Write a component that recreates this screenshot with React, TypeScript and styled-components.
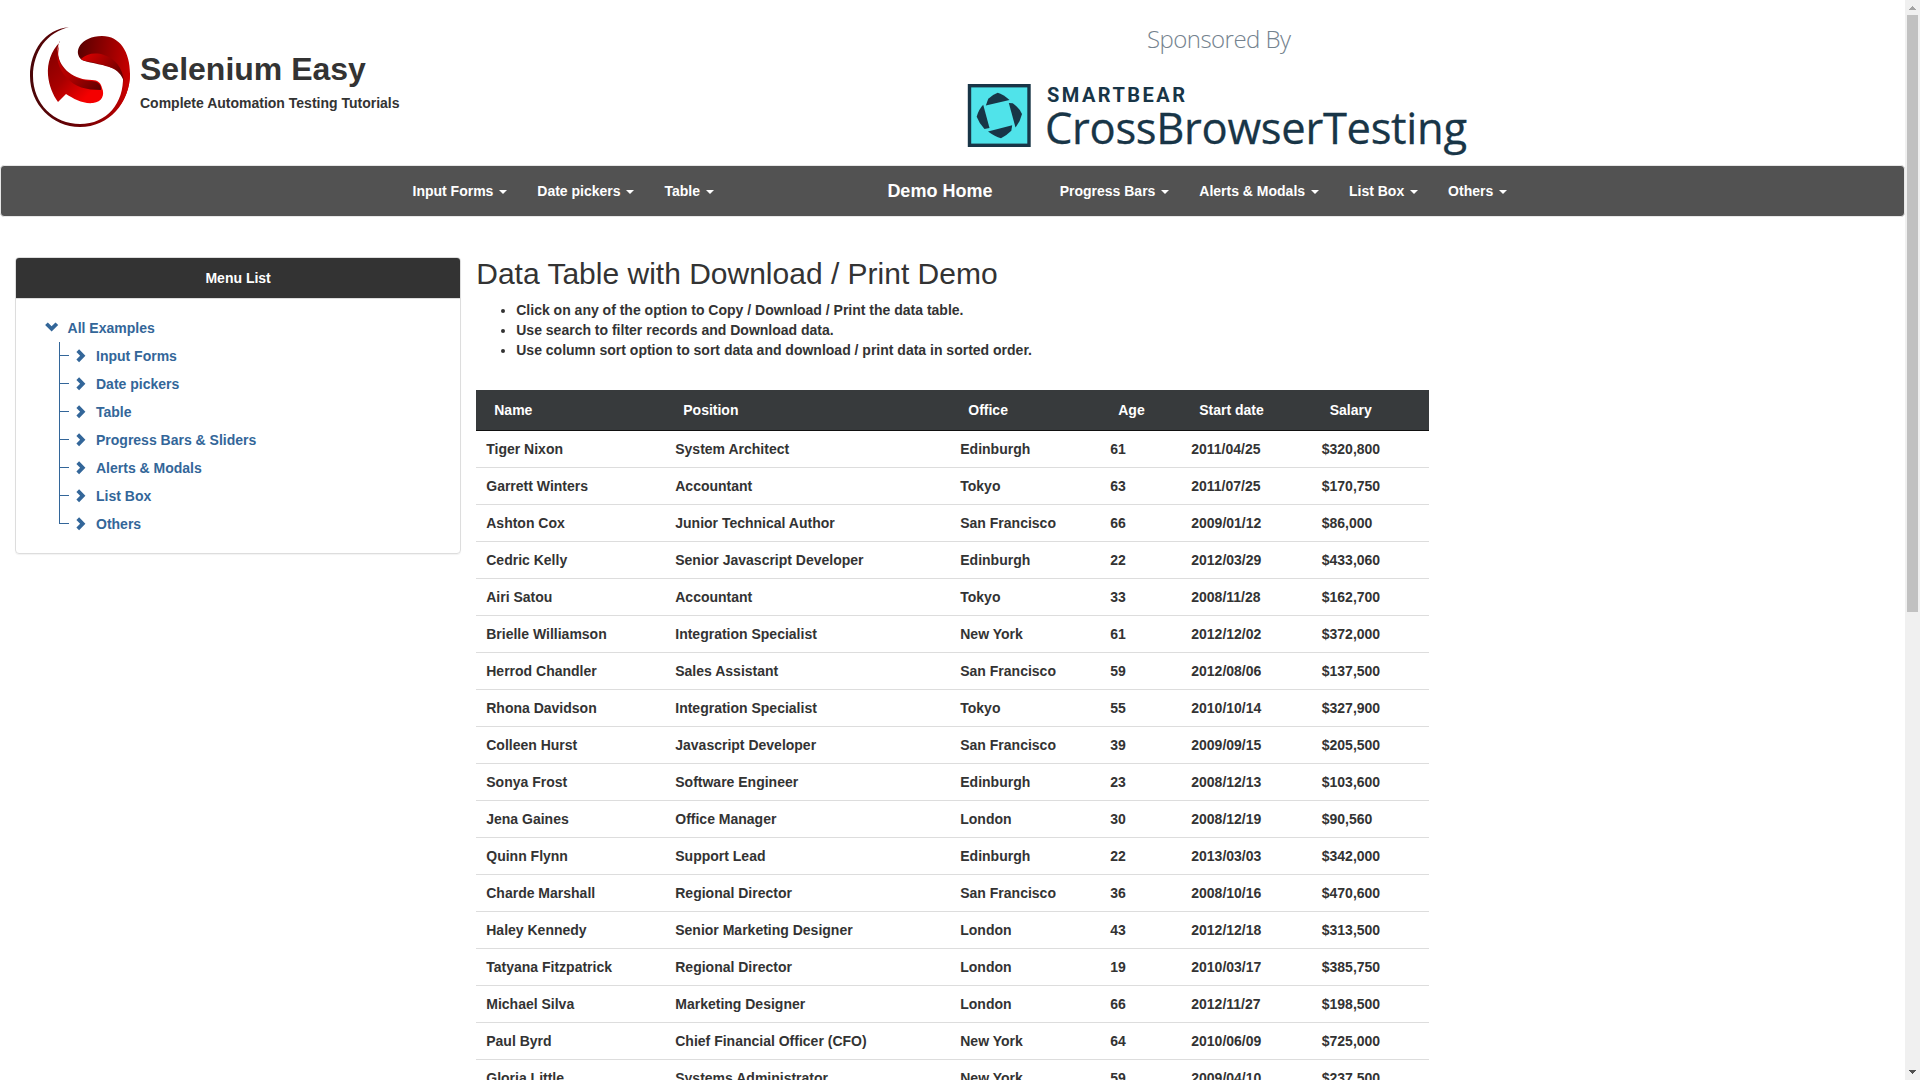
import React from "react";
import styled, { createGlobalStyle } from "styled-components";

const Global = createGlobalStyle`
  *, *::before, *::after { box-sizing: border-box; }
  html, body { margin: 0; height: 100%; overflow: hidden; }
  body {
    font: bold 14px/20px "Liberation Sans", Arial, sans-serif;
    color: #333;
    background: #fff;
  }
`;

const Window = styled.div`
  display: flex;
  width: 1920px;
  height: 1080px;
  overflow: hidden;
`;
const Page = styled.div`
  width: 1905px;
  height: 1080px;
  overflow: hidden;
`;

/* Header */
const Header = styled.header`
  display: flex;
  height: 165px;
`;
const Brand = styled.div`
  display: flex;
  align-items: flex-start;
  gap: 10px;
  width: 967px;
  padding: 27px 0 0 30px;
`;
const BrandText = styled.div`
  padding-top: 25px;
`;
const BrandTitle = styled.h1`
  margin: 0;
  font-size: 32px;
  line-height: 35px;
`;
const BrandSub = styled.div`
  margin-top: 6px;
`;
const Sponsor = styled.svg`
  display: block;
  width: 510px;
  height: 165px;
`;

/* Navigation bar */
const Nav = styled.nav`
  display: flex;
  height: 52px;
  border: 1px solid #e7e7e7;
  border-radius: 4px;
  background: #525252;
  color: #fff;
  white-space: nowrap;
`;
const NavGroup = styled.div<{ $left: number }>`
  display: flex;
  margin-left: ${(p) => p.$left}px;
`;
const NavItem = styled.a`
  padding: 15px;
`;
const NavHome = styled.a`
  width: 172.3px;
  margin-left: 143.5px;
  padding: 15px;
  font-size: 18px;
`;
const Caret = styled.b`
  display: inline-block;
  margin-left: 2px;
  vertical-align: middle;
  border-top: 4px solid;
  border-left: 4px solid transparent;
  border-right: 4px solid transparent;
`;

/* Columns */
const Columns = styled.div`
  display: flex;
  align-items: flex-start;
  gap: 15px;
  padding: 40px 15px 0;
`;
const Panel = styled.aside`
  width: 446.25px;
  height: 297px;
  border: 1px solid #ddd;
  border-radius: 4px;
  box-shadow: 0 1px 1px rgba(0, 0, 0, 0.05);
`;
const PanelHeading = styled.div`
  padding: 10px 15px;
  height: 41px;
  border-bottom: 1px solid #ddd;
  border-radius: 3px 3px 0 0;
  background: #333;
  color: #fff;
  text-align: center;
`;
const Tree = styled.div`
  padding: 19px 29px;
  color: #369;
`;
const TreeRoot = styled.div`
  display: flex;
  height: 24px;
`;
const Branches = styled.ul`
  list-style: none;
  margin: 0 0 0 14px;
  padding: 0;
`;
const Branch = styled.li`
  display: flex;
  height: 28px;
  line-height: 28px;
`;
const Elbow = styled.span<{ $last?: boolean }>`
  width: 10px;
  height: ${(p) => (p.$last ? 14 : 28)}px;
  margin-right: 7px;
  border-left: 1px solid #369;
  background: linear-gradient(#369, #369) 0 13px / 100% 1px no-repeat;
`;
const TreeIcon = styled.svg<{ $gap: number; $top: number }>`
  flex: none;
  width: 14px;
  height: 14px;
  margin: ${(p) => p.$top}px ${(p) => p.$gap}px 0 0;
  fill: #369;
`;

const Main = styled.main`
  width: 952.5px;
`;
const Title = styled.h2`
  margin: 0 0 10px;
  font-size: 30px;
  font-weight: 400;
  line-height: 33px;
`;
const Notes = styled.ul`
  margin: 0 0 30px;
  padding-left: 40px;
`;
const Table = styled.table`
  width: 952.5px;
  table-layout: fixed;
  border-collapse: separate;
  border-spacing: 0;
  white-space: nowrap;
`;
const Th = styled.th<{ $w: number }>`
  width: ${(p) => p.$w}px;
  padding: 10px 18px;
  border-bottom: 1px solid #111;
  background: #373a3c;
  color: #fff;
  text-align: left;
`;
const Td = styled.td`
  padding: 8px 10px;
  border-top: 1px solid #ddd;
  tr:first-child > & { border-top: 0; }
`;

/* Scrollbar */
const Scrollbar = styled.div`
  display: flex;
  flex-direction: column;
  width: 15px;
  height: 1080px;
  background: #f0f0f0;
`;
const Arrow = styled.svg`
  display: block;
  width: 15px;
  height: 15px;
`;
const Track = styled.div`
  flex: 1;
  padding: 0 2px;
`;
const Thumb = styled.div`
  height: 597px;
  background: #c1c1c1;
`;

const leftNav = ["Input Forms", "Date pickers", "Table"];
const rightNav = ["Progress Bars", "Alerts & Modals", "List Box", "Others"];
const tree = ["Input Forms", "Date pickers", "Table", "Progress Bars & Sliders", "Alerts & Modals", "List Box", "Others"];
const columns: [string, number][] = [
  ["Name", 189], ["Position", 285], ["Office", 150], ["Age", 81], ["Start date", 130.5], ["Salary", 117],
];
const rows = [
  ["Tiger Nixon", "System Architect", "Edinburgh", "61", "2011/04/25", "$320,800"],
  ["Garrett Winters", "Accountant", "Tokyo", "63", "2011/07/25", "$170,750"],
  ["Ashton Cox", "Junior Technical Author", "San Francisco", "66", "2009/01/12", "$86,000"],
  ["Cedric Kelly", "Senior Javascript Developer", "Edinburgh", "22", "2012/03/29", "$433,060"],
  ["Airi Satou", "Accountant", "Tokyo", "33", "2008/11/28", "$162,700"],
  ["Brielle Williamson", "Integration Specialist", "New York", "61", "2012/12/02", "$372,000"],
  ["Herrod Chandler", "Sales Assistant", "San Francisco", "59", "2012/08/06", "$137,500"],
  ["Rhona Davidson", "Integration Specialist", "Tokyo", "55", "2010/10/14", "$327,900"],
  ["Colleen Hurst", "Javascript Developer", "San Francisco", "39", "2009/09/15", "$205,500"],
  ["Sonya Frost", "Software Engineer", "Edinburgh", "23", "2008/12/13", "$103,600"],
  ["Jena Gaines", "Office Manager", "London", "30", "2008/12/19", "$90,560"],
  ["Quinn Flynn", "Support Lead", "Edinburgh", "22", "2013/03/03", "$342,000"],
  ["Charde Marshall", "Regional Director", "San Francisco", "36", "2008/10/16", "$470,600"],
  ["Haley Kennedy", "Senior Marketing Designer", "London", "43", "2012/12/18", "$313,500"],
  ["Tatyana Fitzpatrick", "Regional Director", "London", "19", "2010/03/17", "$385,750"],
  ["Michael Silva", "Marketing Designer", "London", "66", "2012/11/27", "$198,500"],
  ["Paul Byrd", "Chief Financial Officer (CFO)", "New York", "64", "2010/06/09", "$725,000"],
  ["Gloria Little", "Systems Administrator", "New York", "59", "2009/04/10", "$237,500"],
];

const Logo = () => (
  <svg width="100" height="100" viewBox="0 0 100 100">
    <defs>
      <linearGradient id="ring" x1="0" y1="0" x2="1" y2="0">
        <stop offset="0" stopColor="#4a0608" />
        <stop offset=".5" stopColor="#6d0004" />
        <stop offset="1" stopColor="#c80000" />
      </linearGradient>
      <linearGradient id="top" x1="0" y1=".3" x2="1" y2=".5">
        <stop offset="0" stopColor="#5c0000" />
        <stop offset="1" stopColor="#c80000" />
      </linearGradient>
      <linearGradient id="fold" x1="0" y1="0" x2="1" y2=".6">
        <stop offset="0" stopColor="#e00000" />
        <stop offset="1" stopColor="#6a0000" />
      </linearGradient>
      <linearGradient id="low" x1="0" y1="0" x2="1" y2="1">
        <stop offset="0" stopColor="#7a0000" />
        <stop offset=".45" stopColor="#a80000" />
        <stop offset=".8" stopColor="#f40000" />
      </linearGradient>
      <linearGradient id="lowFold" x1="0" y1="0" x2="1" y2="1">
        <stop offset="0" stopColor="#c80000" />
        <stop offset=".5" stopColor="#b00000" />
        <stop offset="1" stopColor="#5c0000" />
      </linearGradient>
    </defs>
    <path fill="url(#ring)" d="M39 .3C15 2 0 24 0 49c0 28 22 51 50 51 29 0 50-24 50-54L93 49c1 27-16 48-43 48C24 97 3 77 3 49 3 25 17 5 39 .3Z" />
    <path fill="url(#top)" d="M52 33C42 25 51 9 72 9c18 0 28 16 28 38 0 14-5 25-11 33 4-9 6-20 4-30C88 38 65 38 52 33Z" />
    <path fill="url(#fold)" d="M51 32c5-5 14-7 23-4 10 3 19 12 20 27-4-15-20-17-32-20-5-1-9-1-11-3Z" />
    <path fill="url(#low)" d="M30 15C21 24 17 36 18 48c1 11 5 20 10 27l8-8c8 5 17 10 27 9 9-1 12-8 9-15-1-5-4-8-10-8-17 0-33-11-34-27-1-5 0-8 2-12Z" />
    <path fill="url(#lowFold)" d="M29 18c-4 12-1 24 8 33 8 9 19 12 34 12 1-5-3-9-10-9-16-1-31-9-33-26Z" />
  </svg>
);

export default function App() {
  return (
    <>
      <Global />
      <Window>
        <Page>
          <Header>
            <Brand>
              <Logo />
              <BrandText>
                <BrandTitle>Selenium Easy</BrandTitle>
                <BrandSub>Complete Automation Testing Tutorials</BrandSub>
              </BrandText>
            </Brand>
            <Sponsor viewBox="967 0 510 165" fontFamily="'Open Sans', sans-serif" fontWeight="400">
              <text x="1147" y="48" fontSize="24" fontWeight="300" fill="#74828e" textLength="144">Sponsored By</text>
              <rect x="969.5" y="85.7" width="59.5" height="59.6" fill="#50e3ea" stroke="#183547" strokeWidth="3.4" />
              <g fill="#183547">
                <path d="M985.800 105.500 988.300 98.700Q993 94.300 997.700 92.700 1003 94 1009.500 99.900Z" />
                <path d="M1008.800 102.900 1012.700 103.200Q1019 107.500 1022 114 1020.500 121 1015.500 127.500Z" />
                <path d="M988 131.400 1012.200 125.200 1011.300 130.700Q1006.500 135.500 1001 138.300 995 136.500 988 131.400Z" />
                <path d="M983.200 104.700Q978.500 109.500 976.700 116.700 979.500 124 984.500 129L989.500 128Z" />
              </g>
              <text x="1047" y="102" fontSize="20" fontFamily="Roboto, sans-serif" fontWeight="700" fill="#183547" textLength="138">SMARTBEAR</text>
              <text x="1045" y="143.500" fontSize="43.500" fill="#183547" stroke="#183547" strokeWidth=".3" textLength="422">CrossBrowserTesting</text>
            </Sponsor>
          </Header>
          <Nav>
            <NavGroup $left={396.5}>
              {leftNav.map((t) => <NavItem key={t}>{t} <Caret /></NavItem>)}
            </NavGroup>
            <NavHome>Demo Home</NavHome>
            <NavGroup $left={0}>
              {rightNav.map((t) => <NavItem key={t}>{t} <Caret /></NavItem>)}
            </NavGroup>
          </Nav>
          <Columns>
            <Panel>
              <PanelHeading>Menu List</PanelHeading>
              <Tree>
                <TreeRoot>
                  <TreeIcon $gap={8.6} $top={3} viewBox="0 0 14 14"><path d="M.1 4.100 2.800 1.500 6.600 5.200l3.900-3.700 2.700 2.600L6.600 10.600z" /></TreeIcon>
                  All Examples
                </TreeRoot>
                <Branches>
                  {tree.map((t, i) => (
                    <Branch key={t}>
                      <Elbow $last={i === tree.length - 1} />
                      <TreeIcon $gap={6} $top={7} viewBox="0 0 14 14"><path d="M.4 2.900 3.100.2 9.400 6.700 3.100 13.200.4 10.500l3.700-3.800z" /></TreeIcon>
                      {t}
                    </Branch>
                  ))}
                </Branches>
              </Tree>
            </Panel>
            <Main>
              <Title>Data Table with Download / Print Demo</Title>
              <Notes>
                <li>Click on any of the option to Copy / Download / Print the data table.</li>
                <li>Use search to filter records and Download data.</li>
                <li>Use column sort option to sort data and download / print data in sorted order.</li>
              </Notes>
              <Table>
                <thead>
                  <tr>{columns.map(([t, w]) => <Th key={t} $w={w}>{t}</Th>)}</tr>
                </thead>
                <tbody>
                  {rows.map((r) => (
                    <tr key={r[0]}>{r.map((c, i) => <Td key={i}>{c}</Td>)}</tr>
                  ))}
                </tbody>
              </Table>
            </Main>
          </Columns>
        </Page>
        <Scrollbar>
          <Arrow viewBox="0 0 15 15" shapeRendering="crispEdges"><path fill="#a3a3a3" d="M4 10V9h1V8h1V7h1V6h1v1h1v1h1v1h1v1z" /></Arrow>
          <Track><Thumb /></Track>
          <Arrow viewBox="0 0 15 15" shapeRendering="crispEdges"><path fill="#505050" d="M4 5v1h1v1h1v1h1v1h1V8h1V7h1V6h1V5z" /></Arrow>
        </Scrollbar>
      </Window>
    </>
  );
}
